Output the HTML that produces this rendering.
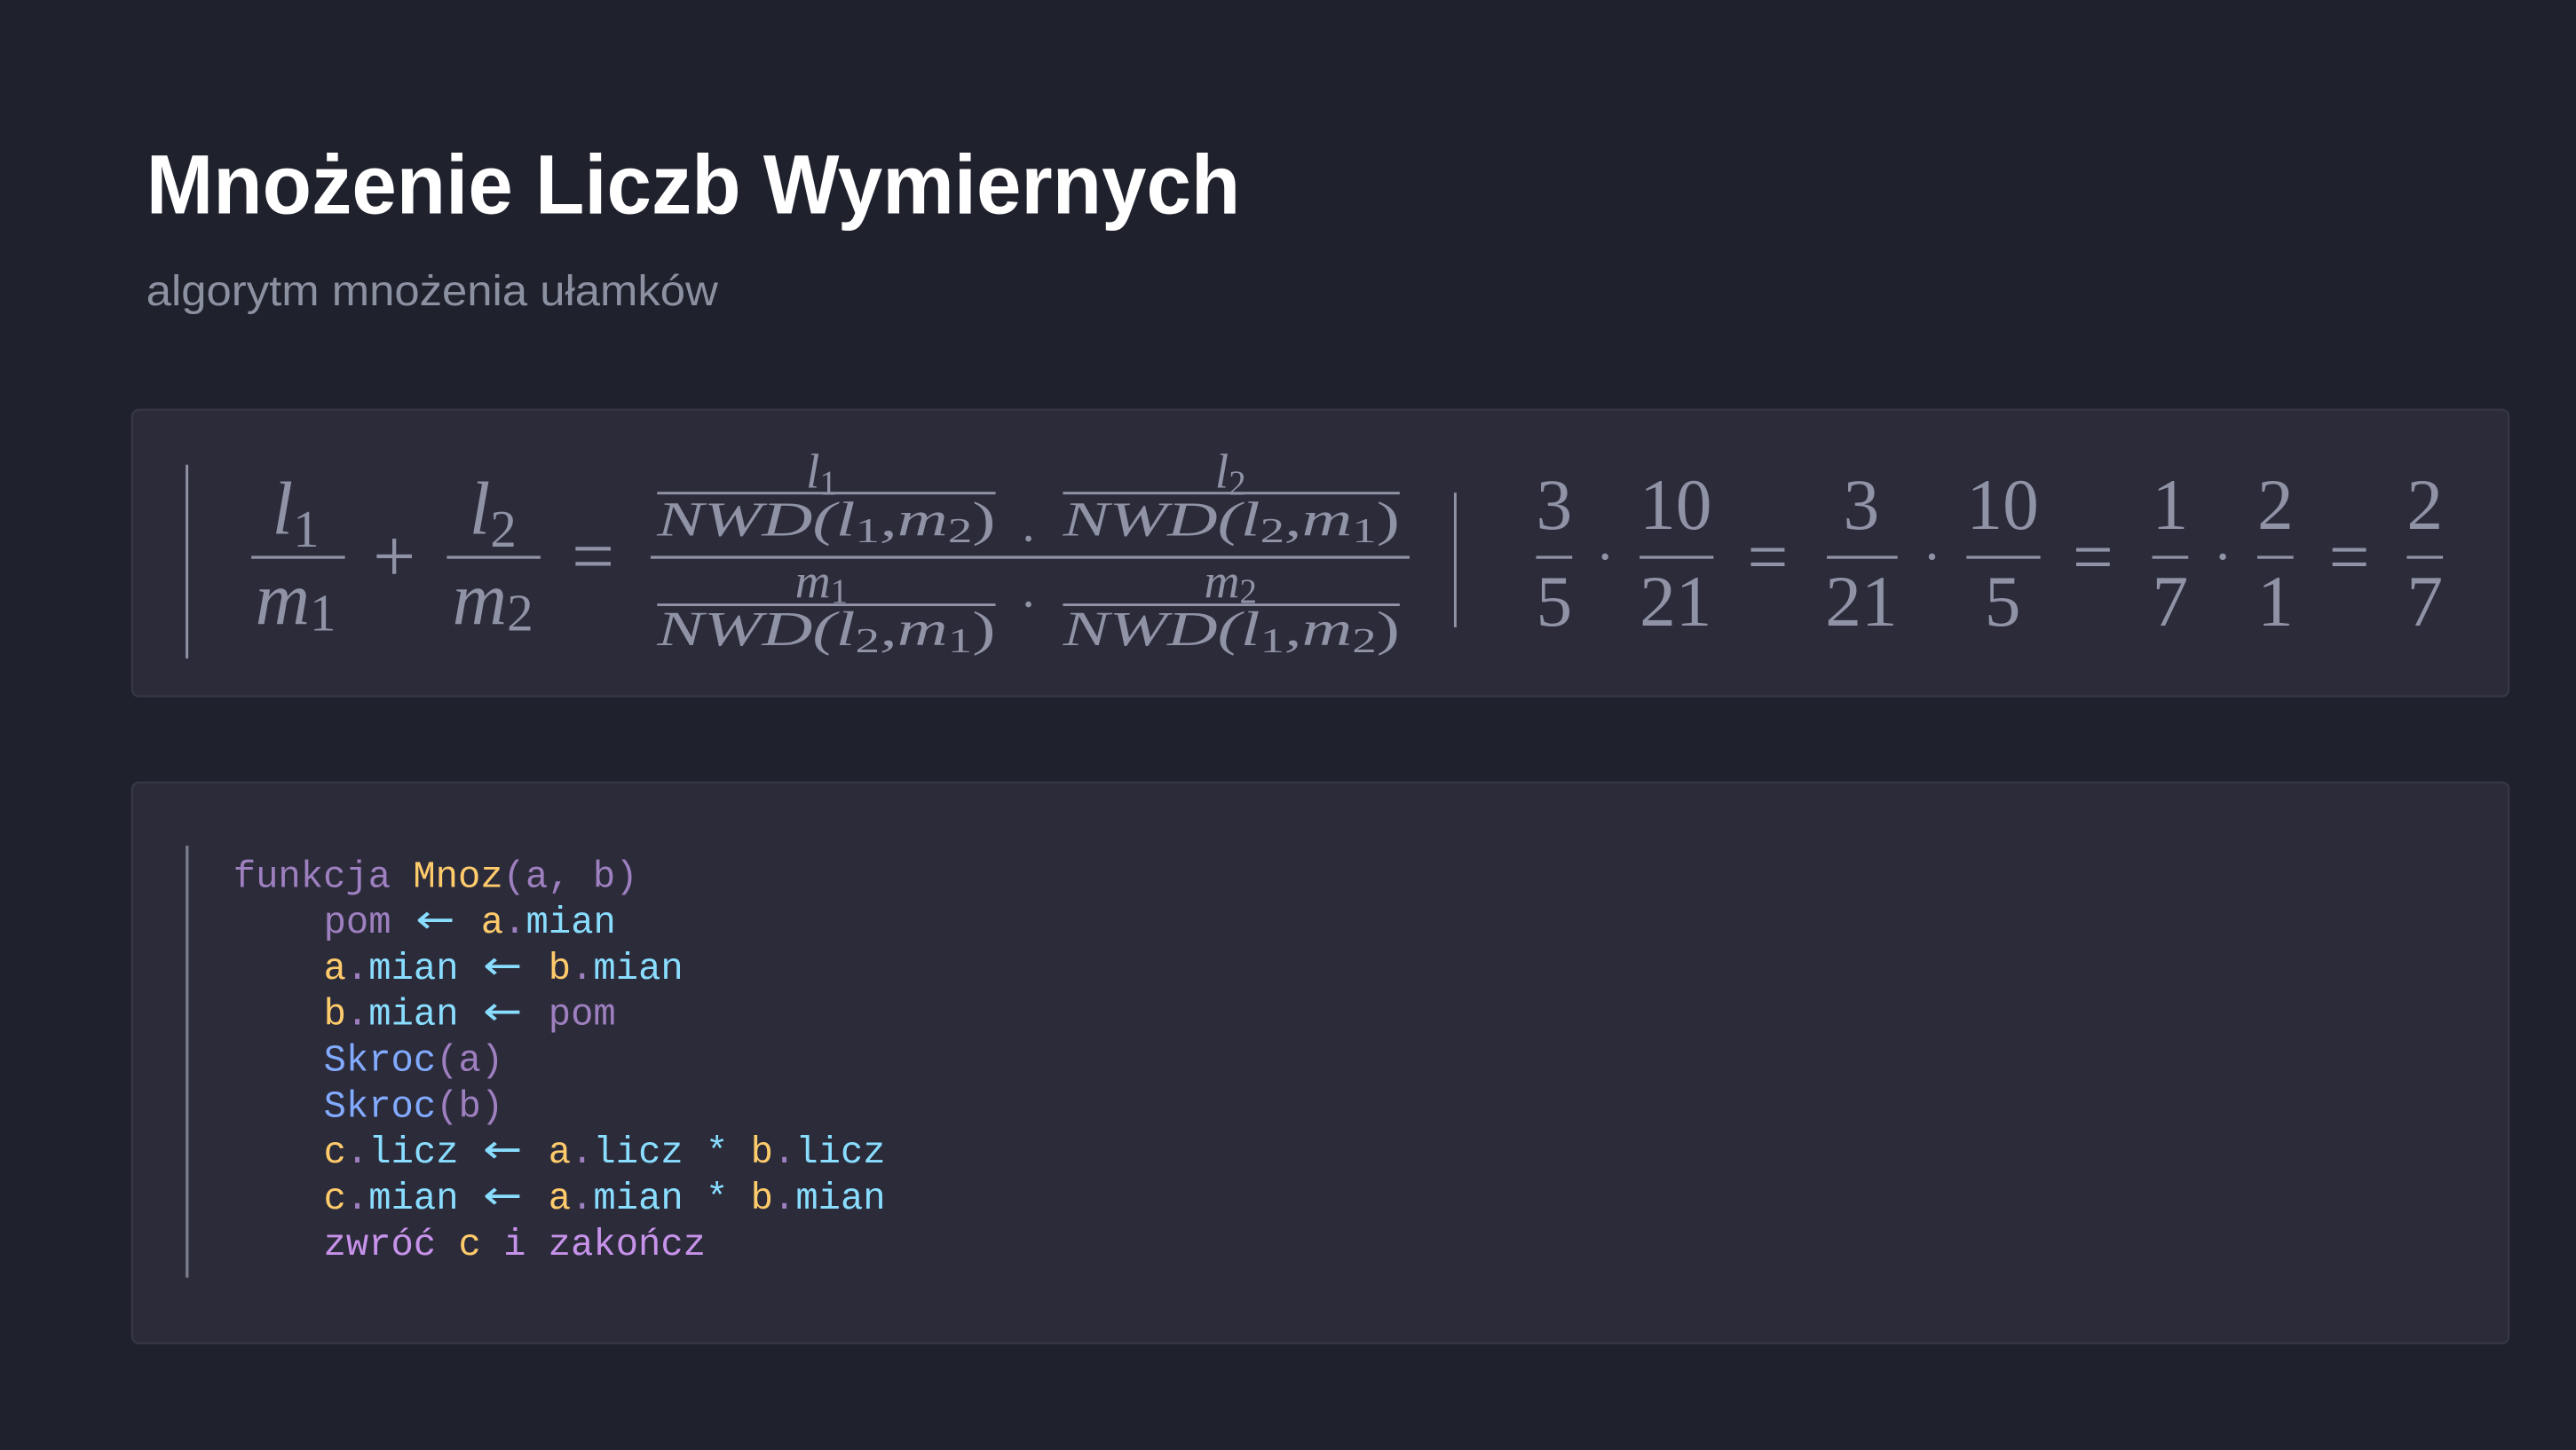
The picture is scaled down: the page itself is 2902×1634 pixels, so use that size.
<!DOCTYPE html>
<html><head><meta charset="utf-8">
<style>
html,body{margin:0;padding:0;background:#1f212d;overflow:hidden}
svg{display:block}
.m{font-family:"Liberation Serif",serif;font-style:italic;fill:#8f93a5}
.n{font-family:"Liberation Serif",serif;font-style:normal;fill:#8f93a5}
.c{font-family:"Liberation Mono",monospace;font-size:22.8px}
.ar{font-family:"DejaVu Sans",sans-serif;font-size:24px;fill:#89ddff}
</style></head>
<body>
<svg width="2902" height="1634" viewBox="0 0 1568 883" preserveAspectRatio="none" xmlns="http://www.w3.org/2000/svg">
<rect x="0" y="0" width="1568" height="883" fill="#1f212d"/>
<text x="89" y="130" font-family="Liberation Sans,sans-serif" font-weight="bold" font-size="51" fill="#ffffff" textLength="666" lengthAdjust="spacingAndGlyphs">Mnożenie Liczb Wymiernych</text>
<text x="89" y="186" font-family="Liberation Sans,sans-serif" font-size="26" fill="#8c91a1" textLength="348" lengthAdjust="spacingAndGlyphs">algorytm mnożenia ułamków</text>

<rect x="80.5" y="249.5" width="1446.5" height="174.5" rx="4" fill="#2b2b3a" stroke="#363846" stroke-width="1.2"/>
<rect x="80.5" y="476.5" width="1446.5" height="341.5" rx="4" fill="#2b2b3a" stroke="#363846" stroke-width="1.2"/>

<!-- math -->
<rect x="113" y="283" width="1.6" height="118" fill="#8f93a5"/>
<g fill="#8f93a5">
<rect x="153" y="338.5" width="57" height="1.8"/>
<rect x="272" y="338.5" width="57" height="1.8"/>
<rect x="396" y="338.5" width="462" height="1.8"/>
<rect x="400" y="299.5" width="206" height="1.6"/>
<rect x="647" y="299.5" width="205" height="1.6"/>
<rect x="400" y="367.5" width="206" height="1.6"/>
<rect x="647" y="367.5" width="205" height="1.6"/>
<rect x="885" y="300" width="1.6" height="82"/>
</g>
<text class="m" font-size="46" x="180" y="325" text-anchor="middle">l<tspan class="n" font-size="32" dy="8">1</tspan></text>
<text class="m" font-size="46" x="180" y="380" text-anchor="middle">m<tspan class="n" font-size="32" dy="4">1</tspan></text>
<text class="m" font-size="46" x="300" y="325" text-anchor="middle">l<tspan class="n" font-size="32" dy="8">2</tspan></text>
<text class="m" font-size="46" x="300" y="380" text-anchor="middle">m<tspan class="n" font-size="32" dy="4">2</tspan></text>
<text class="n" font-size="46" x="240" y="354" text-anchor="middle">+</text>
<text class="n" font-size="46" x="361" y="354" text-anchor="middle">=</text>

<text class="m" font-size="30" x="500" y="297" text-anchor="middle">l<tspan class="n" font-size="21" dy="4">1</tspan></text>
<text class="m" font-size="30" x="749" y="297" text-anchor="middle">l<tspan class="n" font-size="21" dy="4">2</tspan></text>
<text class="m" font-size="30" x="400" y="326" textLength="206" lengthAdjust="spacingAndGlyphs">NWD(l<tspan class="n" font-size="21" dy="4">1</tspan><tspan dy="-4">,m</tspan><tspan class="n" font-size="21" dy="4">2</tspan><tspan dy="-4" class="n">)</tspan></text>
<text class="m" font-size="30" x="647" y="326" textLength="205" lengthAdjust="spacingAndGlyphs">NWD(l<tspan class="n" font-size="21" dy="4">2</tspan><tspan dy="-4">,m</tspan><tspan class="n" font-size="21" dy="4">1</tspan><tspan dy="-4" class="n">)</tspan></text>
<text class="m" font-size="30" x="500" y="364" text-anchor="middle">m<tspan class="n" font-size="21" dy="3">1</tspan></text>
<text class="m" font-size="30" x="749" y="364" text-anchor="middle">m<tspan class="n" font-size="21" dy="3">2</tspan></text>
<text class="m" font-size="30" x="400" y="393" textLength="206" lengthAdjust="spacingAndGlyphs">NWD(l<tspan class="n" font-size="21" dy="4">2</tspan><tspan dy="-4">,m</tspan><tspan class="n" font-size="21" dy="4">1</tspan><tspan dy="-4" class="n">)</tspan></text>
<text class="m" font-size="30" x="647" y="393" textLength="205" lengthAdjust="spacingAndGlyphs">NWD(l<tspan class="n" font-size="21" dy="4">1</tspan><tspan dy="-4">,m</tspan><tspan class="n" font-size="21" dy="4">2</tspan><tspan dy="-4" class="n">)</tspan></text>
<circle cx="626" cy="328" r="1.8" fill="#8f93a5"/>
<circle cx="626" cy="368" r="1.8" fill="#8f93a5"/>

<!-- numeric -->
<g fill="#8f93a5">
<rect x="935" y="338.5" width="22" height="1.8"/>
<rect x="998" y="338.5" width="45" height="1.8"/>
<rect x="1112" y="338.5" width="43" height="1.8"/>
<rect x="1197" y="338.5" width="45" height="1.8"/>
<rect x="1310" y="338.5" width="22" height="1.8"/>
<rect x="1374" y="338.5" width="22" height="1.8"/>
<rect x="1465" y="338.5" width="22" height="1.8"/>
<circle cx="977" cy="339" r="2"/><circle cx="1176" cy="339" r="2"/><circle cx="1353" cy="339" r="2"/>
</g>
<g class="n" font-size="44" text-anchor="middle">
<text class="n" x="946" y="322">3</text><text class="n" x="946" y="381">5</text>
<text class="n" x="1020" y="322">10</text><text class="n" x="1020" y="381">21</text>
<text class="n" x="1133" y="322">3</text><text class="n" x="1133" y="381">21</text>
<text class="n" x="1219" y="322">10</text><text class="n" x="1219" y="381">5</text>
<text class="n" x="1321" y="322">1</text><text class="n" x="1321" y="381">7</text>
<text class="n" x="1385" y="322">2</text><text class="n" x="1385" y="381">1</text>
<text class="n" x="1476" y="322">2</text><text class="n" x="1476" y="381">7</text>
<text class="n" x="1076" y="354">=</text><text class="n" x="1274" y="354">=</text><text class="n" x="1430" y="354">=</text>
</g>

<!-- code -->
<rect x="113" y="515" width="1.8" height="263" fill="#7a7d8c"/>
<g class="c" xml:space="preserve">
<text x="142" y="540" class="c"><tspan fill="#9e7fbf">funkcja </tspan><tspan fill="#ffcb6b">Mnoz</tspan><tspan fill="#9e7fbf">(a, b)</tspan></text>

<text x="197" y="568" class="c"><tspan fill="#9e7fbf">pom</tspan><tspan x="292.8" fill="#ffcb6b">a</tspan><tspan fill="#9e7fbf">.</tspan><tspan fill="#89ddff">mian</tspan></text>
<text x="253" y="568" class="ar" textLength="24" lengthAdjust="spacingAndGlyphs">←</text>

<text x="197" y="596" class="c"><tspan fill="#ffcb6b">a</tspan><tspan fill="#9e7fbf">.</tspan><tspan fill="#89ddff">mian</tspan><tspan x="333.8" fill="#ffcb6b">b</tspan><tspan fill="#9e7fbf">.</tspan><tspan fill="#89ddff">mian</tspan></text>
<text x="294" y="596" class="ar" textLength="24" lengthAdjust="spacingAndGlyphs">←</text>

<text x="197" y="624" class="c"><tspan fill="#ffcb6b">b</tspan><tspan fill="#9e7fbf">.</tspan><tspan fill="#89ddff">mian</tspan><tspan x="333.8" fill="#9e7fbf">pom</tspan></text>
<text x="294" y="624" class="ar" textLength="24" lengthAdjust="spacingAndGlyphs">←</text>

<text x="197" y="652" class="c"><tspan fill="#82aaff">Skroc</tspan><tspan fill="#9e7fbf">(a)</tspan></text>
<text x="197" y="680" class="c"><tspan fill="#82aaff">Skroc</tspan><tspan fill="#9e7fbf">(b)</tspan></text>

<text x="197" y="708" class="c"><tspan fill="#ffcb6b">c</tspan><tspan fill="#9e7fbf">.</tspan><tspan fill="#89ddff">licz</tspan><tspan x="333.8" fill="#ffcb6b">a</tspan><tspan fill="#9e7fbf">.</tspan><tspan fill="#89ddff">licz * </tspan><tspan fill="#ffcb6b">b</tspan><tspan fill="#9e7fbf">.</tspan><tspan fill="#89ddff">licz</tspan></text>
<text x="294" y="708" class="ar" textLength="24" lengthAdjust="spacingAndGlyphs">←</text>

<text x="197" y="736" class="c"><tspan fill="#ffcb6b">c</tspan><tspan fill="#9e7fbf">.</tspan><tspan fill="#89ddff">mian</tspan><tspan x="333.8" fill="#ffcb6b">a</tspan><tspan fill="#9e7fbf">.</tspan><tspan fill="#89ddff">mian * </tspan><tspan fill="#ffcb6b">b</tspan><tspan fill="#9e7fbf">.</tspan><tspan fill="#89ddff">mian</tspan></text>
<text x="294" y="736" class="ar" textLength="24" lengthAdjust="spacingAndGlyphs">←</text>

<text x="197" y="764" class="c"><tspan fill="#c792ea">zwróć </tspan><tspan fill="#ffcb6b">c </tspan><tspan fill="#c792ea">i zakończ</tspan></text>
</g>
</svg>
</body></html>
